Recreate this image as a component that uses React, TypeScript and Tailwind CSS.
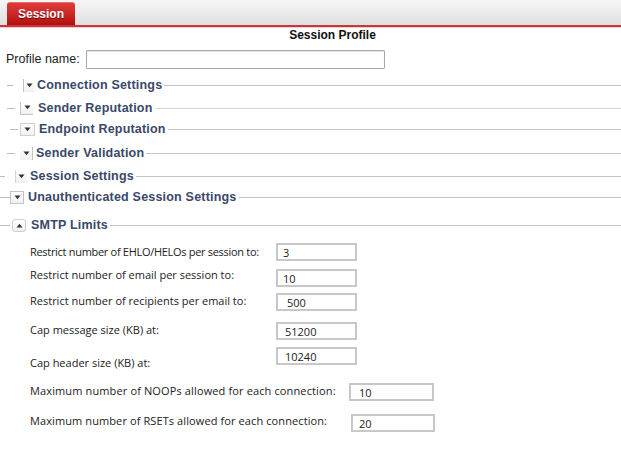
import React from "react";

type Section = {
  title: string;
  row: string;
  dash: string;
  box: string;
  text: string;
  line: string;
  up?: boolean;
};

const sections: Section[] = [
  {
    title: "Connection Settings",
    row: "mt-[8px] pl-[7px]",
    dash: "w-[6px]",
    box: "ml-[10px] w-[11px] border-l border-[#c4c4c4]",
    text: "ml-[3px]",
    line: "bg-[#c4c4c4]",
  },
  {
    title: "Sender Reputation",
    row: "mt-[7px] pl-[7px]",
    dash: "w-[8px]",
    box: "ml-[5px] w-[13px] border-l border-b border-[#c4c4c4]",
    text: "ml-[5px]",
    line: "bg-[#d8d8d8]",
  },
  {
    title: "Endpoint Reputation",
    row: "mt-[5px] pl-[10px]",
    dash: "w-[8px]",
    box: "ml-[2px] w-[15px] border border-[#cfcfcf]",
    text: "ml-[4px]",
    line: "bg-[#c4c4c4]",
  },
  {
    title: "Sender Validation",
    row: "mt-[8px] pl-[7px]",
    dash: "w-[8px]",
    box: "ml-[5px] w-[13px] border-r border-[#c4c4c4]",
    text: "ml-[3px]",
    line: "bg-[#c4c4c4]",
  },
  {
    title: "Session Settings",
    row: "mt-[7px] pl-0",
    dash: "w-[5px]",
    box: "ml-[10px] w-[12px] border-l border-[#d4d4d4]",
    text: "ml-[3px]",
    line: "bg-[#c4c4c4]",
  },
  {
    title: "Unauthenticated Session Settings",
    row: "mt-[5px] pl-0",
    dash: "w-[10px]",
    box: "ml-0 w-[14px] border border-[#c4c4c4]",
    text: "ml-[4px]",
    line: "bg-[#c4c4c4]",
  },
  {
    title: "SMTP Limits",
    row: "mt-[12px] pl-0",
    dash: "w-[10px]",
    box: "ml-[2px] w-[14px] border border-[#cfcfcf] rounded-[3px]",
    text: "ml-[5px]",
    line: "bg-[#c4c4c4]",
    up: true,
  },
];

type Limit = {
  label: string;
  value: string;
  row: string;
  labelW: string;
  labelMt: string;
  inputMt: string;
  inputW: string;
  pad: string;
};

const limits: Limit[] = [
  { label: "Restrict number of EHLO/HELOs per session to:", value: "3", row: "mt-[10px]", labelW: "w-[246px] tracking-[-0.3px]", labelMt: "mt-[1px]", inputMt: "mt-0", inputW: "w-[81px]", pad: "pl-[5px]" },
  { label: "Restrict number of email per session to:", value: "10", row: "mt-[6px]", labelW: "w-[246px]", labelMt: "mt-0", inputMt: "mt-[2px]", inputW: "w-[81px]", pad: "pl-[5px]" },
  { label: "Restrict number of recipients per email to:", value: "500", row: "mt-[6px]", labelW: "w-[246px]", labelMt: "mt-0", inputMt: "mt-0", inputW: "w-[81px]", pad: "pl-[9px]" },
  { label: "Cap message size (KB) at:", value: "51200", row: "mt-[11px]", labelW: "w-[246px]", labelMt: "mt-0", inputMt: "mt-0", inputW: "w-[81px]", pad: "pl-[7px]" },
  { label: "Cap header size (KB) at:", value: "10240", row: "mt-[7px]", labelW: "w-[246px]", labelMt: "mt-[8px]", inputMt: "mt-0", inputW: "w-[81px]", pad: "pl-[7px]" },
  { label: "Maximum number of NOOPs allowed for each connection:", value: "10", row: "mt-[13px]", labelW: "w-[319px] tracking-[0.13px]", labelMt: "mt-0", inputMt: "mt-0", inputW: "w-[85px]", pad: "pl-[8px]" },
  { label: "Maximum number of RSETs allowed for each connection:", value: "20", row: "mt-[12px]", labelW: "w-[321px] tracking-[0.1px]", labelMt: "mt-0", inputMt: "mt-[1px]", inputW: "w-[84px]", pad: "pl-[6px]" },
];

function Toggle({ up }: { up?: boolean }) {
  return (
    <svg width="7" height="5" viewBox="0 0 7 5">
      {up ? (
        <path d="M0.5 4.5 L3.5 0.8 L6.5 4.5 Z" fill="#333" />
      ) : (
        <path d="M0.5 0.5 L6.5 0.5 L3.5 4.2 Z" fill="#333" />
      )}
    </svg>
  );
}

export default function App() {
  return (
    <div className="w-[621px] h-[455px] overflow-hidden bg-white font-['Liberation_Sans',Arial,sans-serif]">
      {/* tab strip */}
      <div className="h-[25px] flex items-end pl-[7px] bg-gradient-to-b from-[#f6f6f6] to-[#e0e0e0]">
        <div className="h-[23px] w-[68px] rounded-t-[3px] border-t border-[#e86a6a] bg-gradient-to-b from-[#e03a3a] to-[#b30d0d] flex items-center justify-center text-[12px] font-bold text-white [text-shadow:0_1px_0_#7a0000]">
          Session
        </div>
      </div>
      <div className="h-[2px] bg-[#c1393b] shadow-[0_1px_1px_#f3c5c5]" />

      <div className="mt-[1px] pl-[44px] text-center text-[12px] leading-[14px] font-bold text-[#111]">
        Session Profile
      </div>

      <div className="mt-[8px] flex items-center pl-[6px]">
        <span className="w-[80px] text-[12.5px] text-[#222]">Profile name:</span>
        <div className="h-[19px] w-[299px] border border-[#a8a8a8] rounded-[1px] shadow-[inset_0_1px_1px_#e4e4e4]" />
      </div>

      {sections.map((s) => (
        <div key={s.title} className={`h-[16px] flex items-center ${s.row}`}>
          <div className={`h-px bg-[#bdbdbd] ${s.dash}`} />
          <div className={`h-[13px] flex items-center justify-center bg-gradient-to-b from-white to-[#f0f0f0] ${s.box}`}>
            <Toggle up={s.up} />
          </div>
          <span className={`text-[12.5px] tracking-[0.2px] font-bold text-[#3a4869] whitespace-nowrap ${s.text}`}>
            {s.title}
          </span>
          <div className={`ml-[2px] h-px flex-1 ${s.line}`} />
        </div>
      ))}

      <div className="pl-[30px] font-['Open_Sans',sans-serif] text-[11px] leading-[15px] text-[#222]">
        {limits.map((l) => (
          <div key={l.label} className={`flex items-start ${l.row}`}>
            <span className={`whitespace-nowrap ${l.labelW} ${l.labelMt}`}>{l.label}</span>
            <div className={`h-[18px] border-2 border-[#c8c8c8] flex items-center ${l.inputW} ${l.inputMt} ${l.pad}`}>
              {l.value}
            </div>
          </div>
        ))}
      </div>
    </div>
  );
}
